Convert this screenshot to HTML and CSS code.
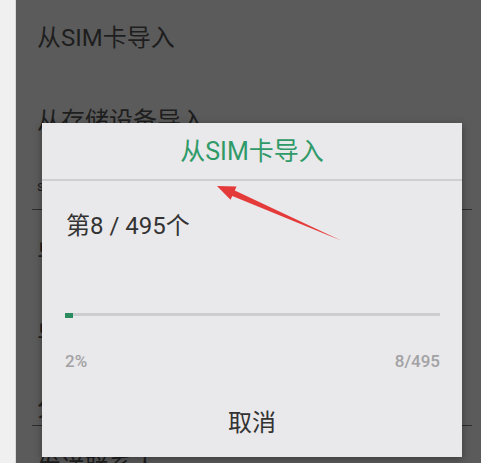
FILE: index.html
```html
<!DOCTYPE html>
<html lang="zh-CN">
<head>
  <meta charset="UTF-8">
  <meta name="viewport" content="width=device-width, initial-scale=1.0">
  <title>导入联系人</title>
  <link rel="stylesheet" href="styles.css">
</head>
<body>
  <div class="screen">
    <div class="edge"></div>

    <!-- 背景列表 -->
    <div class="list">
      <div class="item item-first">从SIM卡导入</div>
      <div class="item item-second">
        <div class="item-title">从存储设备导入</div>
        <div class="item-sub">sd卡、手机存储</div>
      </div>
      <div class="divider"></div>
      <div class="item item-a">导出到存储设备</div>
      <div class="item item-b">导出到SIM卡</div>
      <div class="item item-c">分享联系人</div>
      <div class="divider"></div>
      <div class="item item-last">发送联系人</div>
    </div>

    <!-- 导入对话框 -->
    <div class="dialog">
      <div class="dialog-title">从SIM卡导入</div>
      <div class="dialog-body">
        <div class="count">第8 / 495个</div>
        <div class="progress">
          <div class="progress-fill" style="width: 2%"></div>
        </div>
        <div class="progress-labels">
          <span>2%</span>
          <span>8/495</span>
        </div>
      </div>
      <div class="dialog-button">取消</div>
    </div>

    <!-- 红色箭头标注 -->
    <svg class="arrow" width="481" height="463" viewBox="0 0 481 463">
      <polygon points="217,186 236.5,186.5 234.8,190.6 341,240.5 232.3,196 230.5,199.8" fill="#e53a3a" />
    </svg>
  </div>
</body>
</html>
```

FILE: styles.css
```css
* {
  margin: 0;
  padding: 0;
  box-sizing: border-box;
}

body {
  font-family: Roboto, "Noto Sans CJK SC", sans-serif;
  background-color: #efefef;
  width: 481px;
  height: 463px;
  overflow: hidden;
}

.screen {
  position: relative;
  display: flex;
  width: 481px;
  height: 463px;
  overflow: hidden;
}

.edge {
  width: 16px;
  background-color: #f0f0f0;
  border-right: 1px solid #d8d8d8;
}

/* 背景列表 */
.list {
  flex: 1;
  background-color: #5b5b5b;
  color: #1e1e1e;
  font-size: 24px;
}

.item {
  padding-left: 21px;
  white-space: nowrap;
}

.item-first {
  height: 76px;
  line-height: 76px;
}

.item-second {
  padding-top: 24px;
  height: 133px;
}

.item-title {
  line-height: 42px;
}

.item-sub {
  margin-top: 34px;
  font-size: 14px;
  line-height: 20px;
}

.item-a {
  height: 80px;
  padding-top: 34px;
  line-height: 20px;
}

.item-b {
  height: 90px;
  padding-top: 35px;
  line-height: 20px;
}

.item-c {
  height: 45px;
  padding-top: 18px;
  line-height: 20px;
}

.item-last {
  padding-top: 30px;
  line-height: 24px;
}

.divider {
  height: 1px;
  margin: 0 9px 0 16px;
  background-color: #2e2e2e;
}

/* 对话框 */
.dialog {
  position: absolute;
  left: 42px;
  top: 123px;
  width: 420px;
  height: 334px;
  background-color: #e9e8ea;
  box-shadow: 0 2px 8px rgba(0, 0, 0, 0.35);
  display: flex;
  flex-direction: column;
}

.dialog-title {
  height: 58px;
  line-height: 58px;
  text-align: center;
  font-size: 25px;
  color: #2f9a68;
  border-bottom: 2px solid #cfcfd1;
}

.dialog-body {
  padding: 33px 22px 0 23px;
}

.count {
  font-size: 24px;
  line-height: 24px;
  color: #333333;
  padding-left: 1px;
}

.progress {
  margin-top: 76px;
  height: 3px;
  background-color: #cdcdcf;
}

.progress-fill {
  height: 5px;
  margin-top: -1px;
  background-color: #2b8c60;
}

.progress-labels {
  margin-top: 35px;
  display: flex;
  justify-content: space-between;
  font-size: 17px;
  font-weight: 500;
  line-height: 20px;
  color: #a2a2a4;
}

.dialog-button {
  flex: 1;
  display: flex;
  align-items: center;
  justify-content: center;
  padding-top: 12px;
  font-size: 24px;
  color: #333333;
}

.arrow {
  position: absolute;
  left: 0;
  top: 0;
  pointer-events: none;
}
```
